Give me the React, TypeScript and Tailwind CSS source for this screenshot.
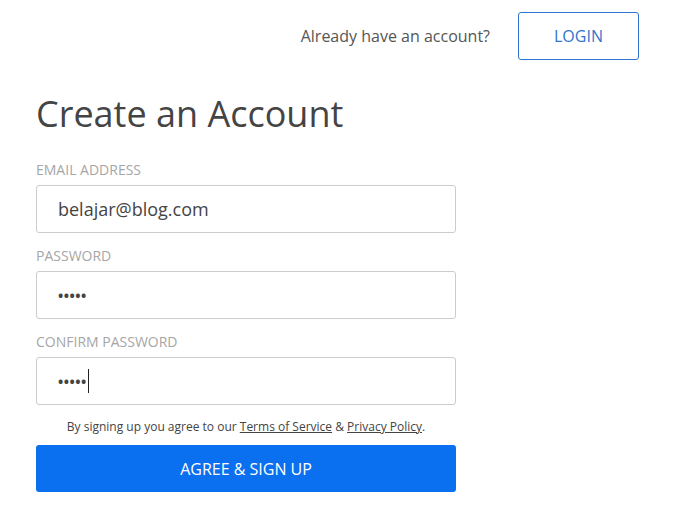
import React from 'react';

const Field = ({ label, children }: { label: string; children: React.ReactNode }) => (
    <div className="flex flex-col">
        <label className="text-[14px] leading-[20px] text-[#a6a6a6] uppercase mb-[5px]">{label}</label>
        <div className="h-[48px] w-[420px] border border-[#cccccc] rounded-[3px] bg-white flex items-center pl-[21px] text-[#444]">
            {children}
        </div>
    </div>
);

export default function App() {
    return (
        <div className="w-[674px] h-[514px] bg-white relative" style={{ fontFamily: '"Open Sans", sans-serif' }}>
            {/* top bar */}
            <div className="flex items-center justify-end pt-[12px] pr-[35px] gap-[28px]">
                <span className="text-[16px] text-[#555]">Already have an account?</span>
                <button className="w-[121px] h-[48px] border border-[#2f74d0] rounded-[3px] text-[#2f74d0] text-[16px] bg-white">
                    LOGIN
                </button>
            </div>

            <div className="pl-[36px] pt-[32px] w-[456px]">
                <h1 className="text-[36px] leading-[44px] text-[#444] font-normal">Create an Account</h1>

                <div className="mt-[24px] flex flex-col gap-[13px]">
                    <Field label="Email Address">
                        <span className="text-[18px]">belajar@blog.com</span>
                    </Field>
                    <Field label="Password">
                        <span className="text-[14px] font-bold tracking-[0.5px]">•••••</span>
                    </Field>
                    <Field label="Confirm Password">
                        <span className="text-[14px] font-bold tracking-[0.5px]">•••••</span>
                        <span className="ml-[1px] w-px h-[24px] bg-[#222]" />
                    </Field>
                </div>

                <p className="mt-[13px] text-[12px] text-[#444] text-center w-[420px]">
                    By signing up you agree to our <a className="underline">Terms of Service</a> &amp; <a className="underline">Privacy Policy</a>.
                </p>

                <button className="mt-[9px] w-[420px] h-[47px] bg-[#0a70f0] rounded-[3px] text-white text-[16px]">
                    AGREE &amp; SIGN UP
                </button>
            </div>
        </div>
    );
}
